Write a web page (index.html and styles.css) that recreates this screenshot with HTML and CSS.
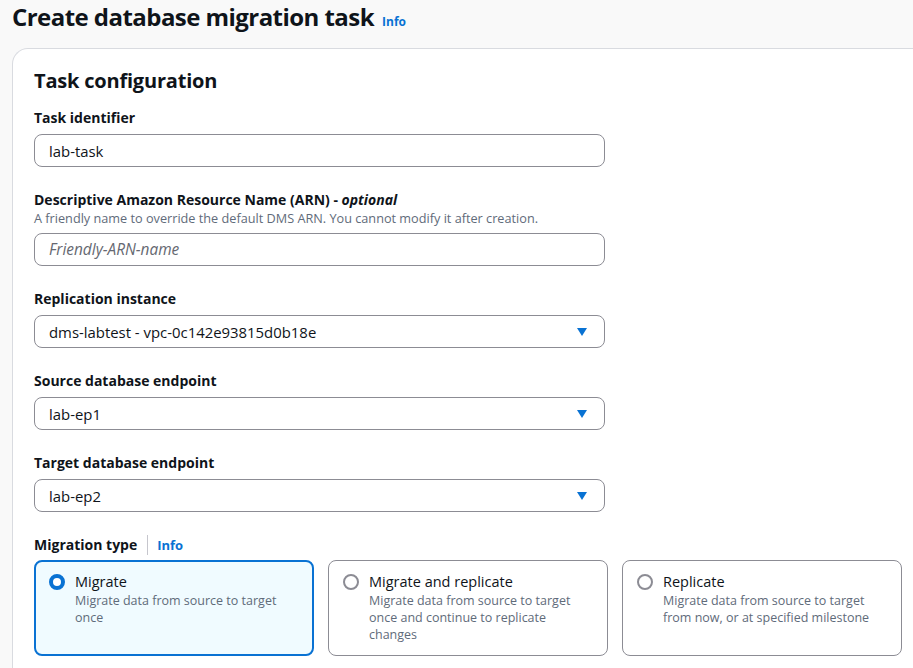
FILE: index.html
```html
<!DOCTYPE html>
<html>
<head>
<meta charset="utf-8">
<link rel="stylesheet" href="styles.css">
</head>
<body>
<div class="page">
  <div class="title-row">
    <h1 class="title">Create database migration task</h1>
    <a class="info">Info</a>
  </div>
  <div class="card">
    <h2 class="card-title">Task configuration</h2>

    <div class="field">
      <div class="label">Task identifier</div>
      <div class="input">lab-task</div>
    </div>

    <div class="field">
      <div class="label">Descriptive Amazon Resource Name (ARN) - <i>optional</i></div>
      <div class="desc">A friendly name to override the default DMS ARN. You cannot modify it after creation.</div>
      <div class="input placeholder">Friendly-ARN-name</div>
    </div>

    <div class="field">
      <div class="label">Replication instance</div>
      <div class="input select"><span>dms-labtest - vpc-0c142e93815d0b18e</span><svg class="caret" width="12" height="10" viewBox="0 0 12 10"><path d="M1 1h10L6 9z" fill="#0972d3"/></svg></div>
    </div>

    <div class="field">
      <div class="label">Source database endpoint</div>
      <div class="input select"><span>lab-ep1</span><svg class="caret" width="12" height="10" viewBox="0 0 12 10"><path d="M1 1h10L6 9z" fill="#0972d3"/></svg></div>
    </div>

    <div class="field">
      <div class="label">Target database endpoint</div>
      <div class="input select"><span>lab-ep2</span><svg class="caret" width="12" height="10" viewBox="0 0 12 10"><path d="M1 1h10L6 9z" fill="#0972d3"/></svg></div>
    </div>

    <div class="field">
      <div class="label label-info">Migration type <span class="sep"></span><a class="info info-sm">Info</a></div>
      <div class="tiles">
        <div class="tile selected">
          <span class="radio on"></span>
          <div class="tile-text">
            <div class="tile-title">Migrate</div>
            <div class="tile-desc">Migrate data from source to target once</div>
          </div>
        </div>
        <div class="tile">
          <span class="radio"></span>
          <div class="tile-text">
            <div class="tile-title">Migrate and replicate</div>
            <div class="tile-desc">Migrate data from source to target once and continue to replicate changes</div>
          </div>
        </div>
        <div class="tile">
          <span class="radio"></span>
          <div class="tile-text">
            <div class="tile-title">Replicate</div>
            <div class="tile-desc">Migrate data from source to target from now, or at specified milestone</div>
          </div>
        </div>
      </div>
    </div>
  </div>
</div>
</body>
</html>
```

FILE: styles.css
```css
* { box-sizing: border-box; }
html, body { margin: 0; padding: 0; }
body {
  background: #f9f9f9;
  font-family: "Open Sans", "Noto Sans", sans-serif;
  color: #16191f;
  overflow: hidden;
  width: 913px;
  height: 668px;
}
.page { padding: 0 0 0 12px; }
.title-row {
  display: flex;
  align-items: baseline;
  gap: 8px;
  height: 48px;
}
.title {
  margin: 0;
  font-size: 24px;
  font-weight: 700;
  line-height: 34px;
  letter-spacing: -0.55px;
  color: #0f141a;
}
.info {
  color: #0972d3;
  font-size: 12px;
  font-weight: 700;
  text-decoration: none;
}
.info-sm { font-size: 13px; }
.card {
  background: #fff;
  border: 1px solid #d9dbe0;
  border-right: none;
  border-radius: 16px 0 0 0;
  padding: 18px 0 40px 21px;
  width: 910px;
  height: 700px;
}
.card-title {
  margin: 0 0 13px 0;
  font-size: 20px;
  font-weight: 700;
  line-height: 28px;
  letter-spacing: -0.2px;
  color: #0f141a;
}
.field { margin-bottom: 23px; }
.label {
  font-size: 14px;
  font-weight: 700;
  line-height: 20px;
  color: #0f141a;
  margin-bottom: 6px;
}
.label i { font-weight: 700; }
.desc {
  font-size: 12.7px;
  line-height: 16px;
  color: #5f6b7a;
  margin-top: -6px;
  margin-bottom: 7px;
}
.input {
  width: 571px;
  height: 33px;
  border: 1px solid #8c8c94;
  border-radius: 8px;
  padding: 0 14px;
  display: flex;
  align-items: center;
  font-size: 14.9px;
  color: #0f141a;
}
.placeholder { font-style: italic; color: #656871; font-size: 15.4px; }
.select { justify-content: space-between; padding-right: 16px; }
.caret { display: block; }
.label-info { display: flex; align-items: center; margin-bottom: 5px; }
.sep {
  display: inline-block;
  width: 1px;
  height: 20px;
  background: #c6c6cd;
  margin: 0 9px 0 10px;
}
.tiles { display: flex; gap: 14px; }
.tile {
  width: 280px;
  height: 96px;
  border: 1px solid #8c8c94;
  border-radius: 8px;
  padding: 11px 22px 0 14px;
  display: flex;
  gap: 10px;
  align-items: flex-start;
}
.tile.selected {
  border: 2px solid #0972d3;
  background: #f0fbff;
  padding: 10px 21px 0 13px;
}
.radio {
  flex: none;
  width: 16px;
  height: 16px;
  border-radius: 50%;
  border: 2px solid #8c8c94;
  margin-top: 2px;
  background: #fff;
}
.radio.on { border: 4.5px solid #0972d3; }
.tile-title { font-size: 14.5px; line-height: 20px; color: #0f141a; }
.tile-desc { font-size: 12.5px; line-height: 17px; color: #5f6b7a; }
```
